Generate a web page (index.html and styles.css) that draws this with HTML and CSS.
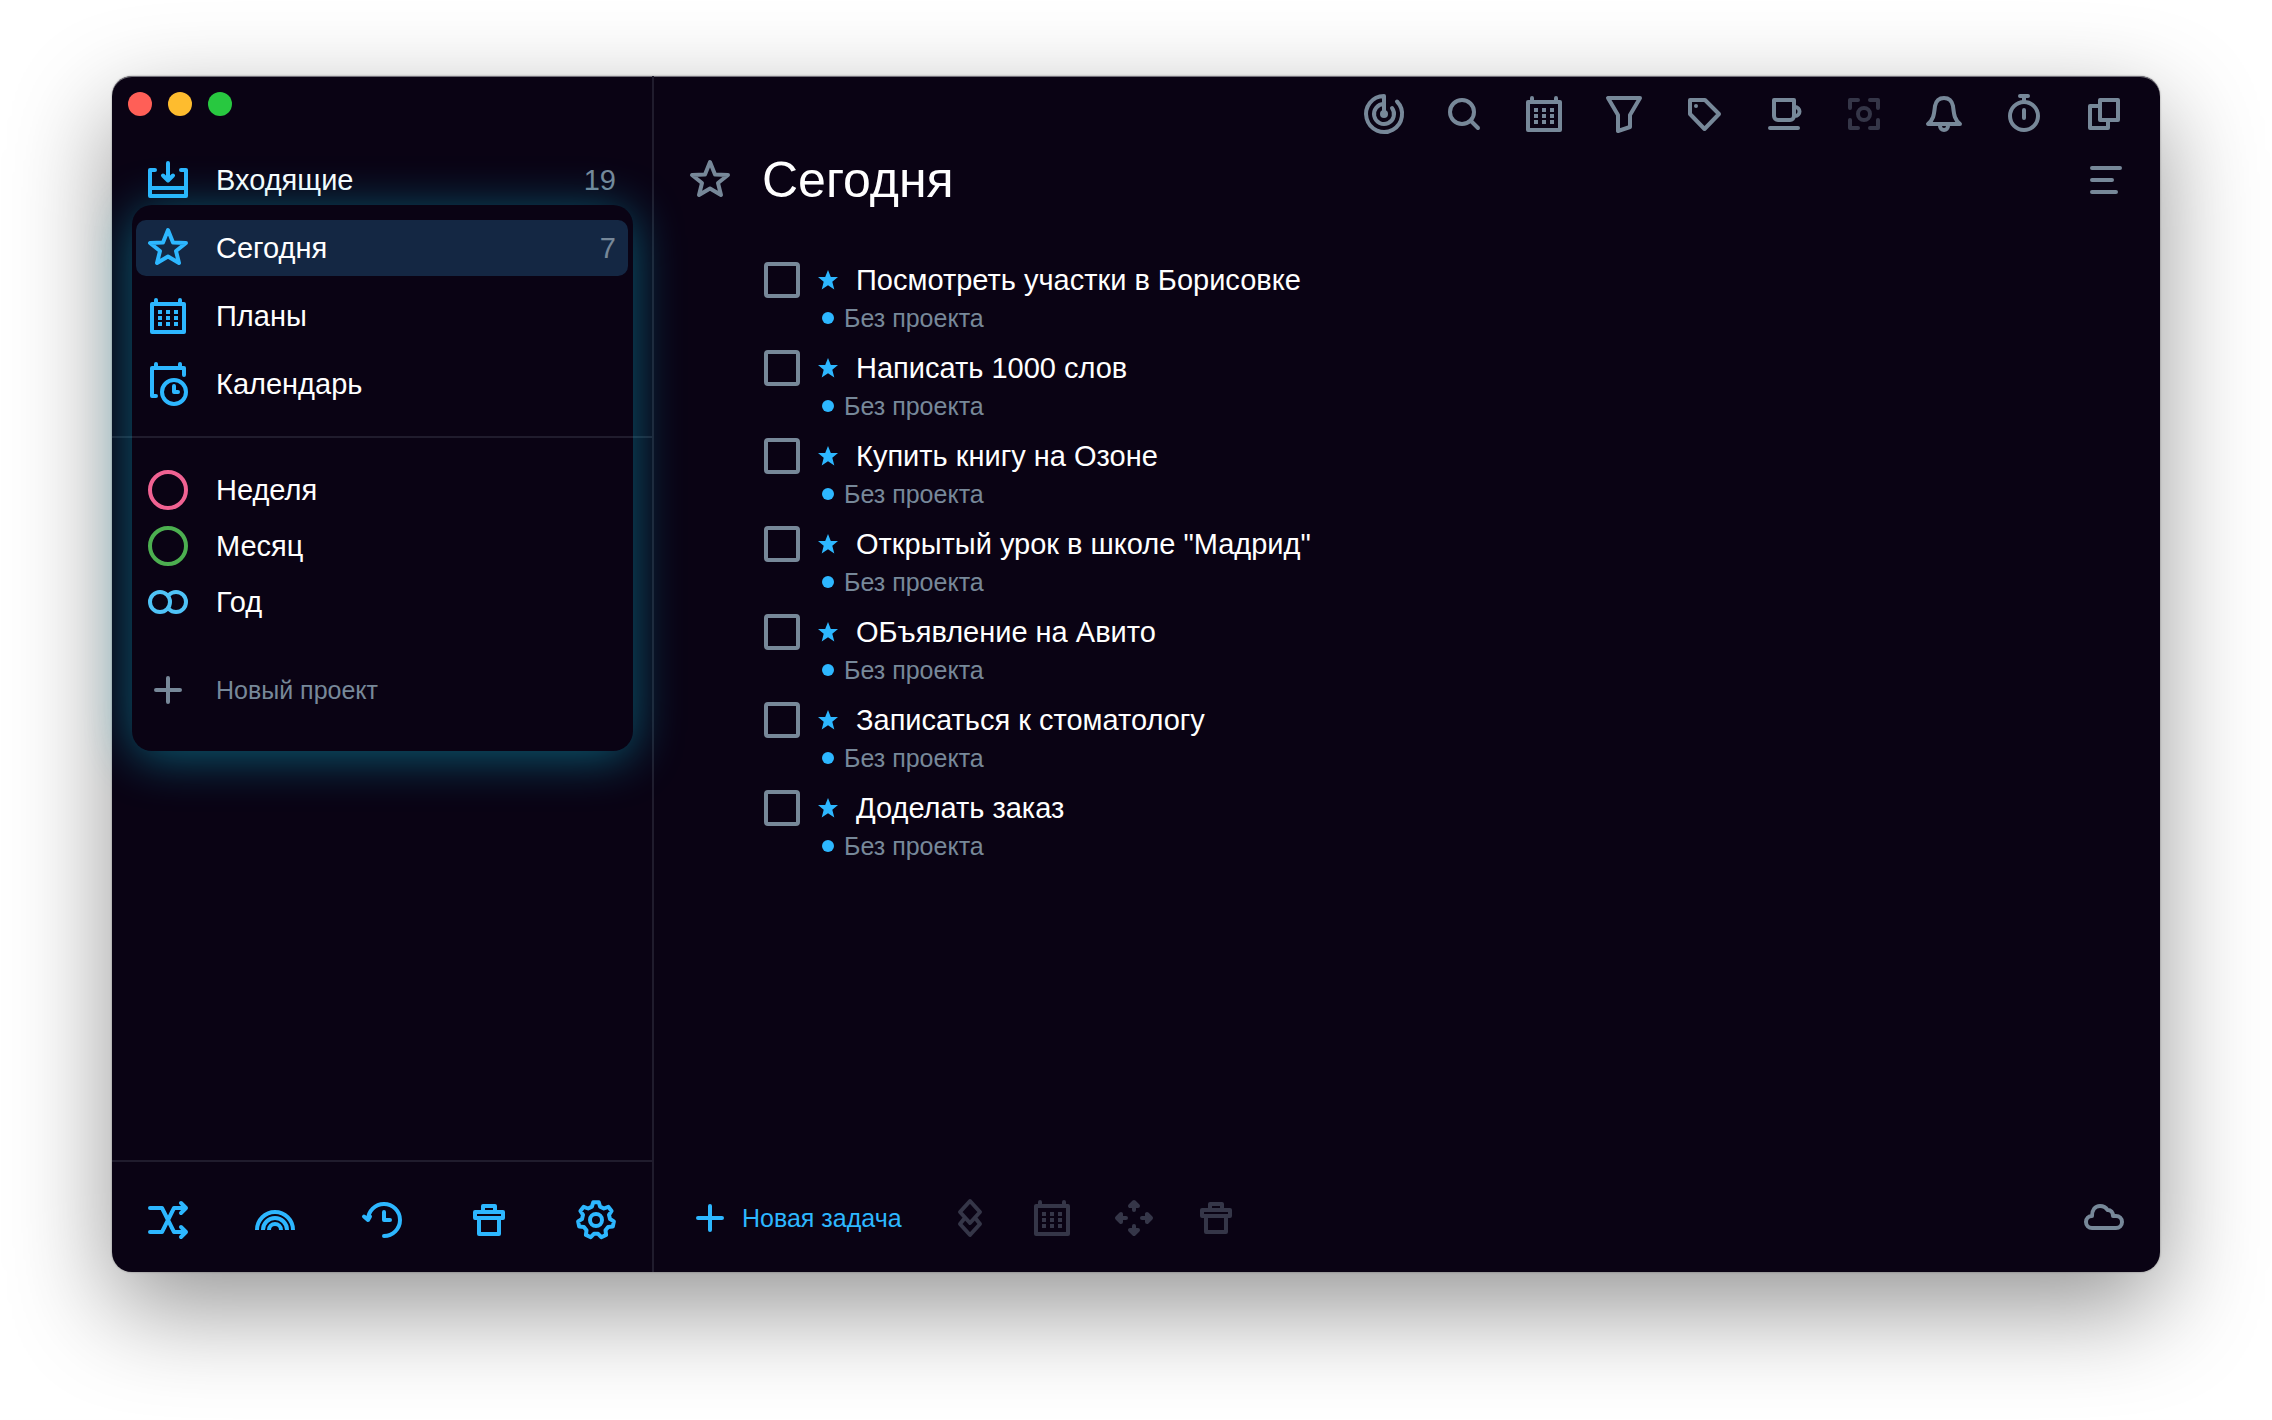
FILE: index.html
```html
<!DOCTYPE html>
<html lang="ru">
<head>
<meta charset="utf-8">
<meta name="viewport" content="width=device-width, initial-scale=1">
<title>Сегодня</title>
<link rel="stylesheet" href="styles.css">
</head>
<body>
<svg class="sprite" aria-hidden="true">
  <defs>
    <symbol id="inbox" viewBox="0 0 40 40"><path d="M7 10H2V36H38V10H33M2 28H38M20 3V20M15 15.500l5 5 5-5"/></symbol>
    <symbol id="star" viewBox="0 0 40 40"><path d="M20 2L25 14.500L38 15L28 23L31 35L20 28.500L9 35L12 23L2 15L15 14.500Z"/></symbol>
    <symbol id="star-solid" viewBox="0 0 20 20"><path class="solid" d="M10 0L12.800 7H20L14.300 11.700L16.300 19.500L10 15.200L3.700 19.500L5.700 11.700L0 7H7.200Z"/></symbol>
    <symbol id="calendar" viewBox="0 0 40 40"><path d="M4 8H36V36H4ZM8 8V4M32 8V4"/><path class="solid" d="M10 14h4v4h-4zM18 14h4v4h-4zM26 14h4v4h-4zM10 20h4v4h-4zM18 20h4v4h-4zM26 20h4v4h-4zM10 26h4v4h-4zM18 26h4v4h-4zM26 26h4v4h-4z"/></symbol>
    <symbol id="calendar-clock" viewBox="0 0 40 40"><path d="M8 32H4V4H36V11M8 4V0M32 4V0M26 22V28H30"/><circle cx="26" cy="28" r="12"/></symbol>
    <symbol id="ring" viewBox="0 0 40 40"><circle cx="20" cy="20" r="18"/></symbol>
    <symbol id="rings" viewBox="0 0 40 40"><circle cx="28" cy="20" r="10"/><circle class="mask" cx="12" cy="20" r="10"/></symbol>
    <symbol id="plus" viewBox="0 0 40 40"><path d="M8 20H32M20 8V32"/></symbol>
    <symbol id="shuffle" viewBox="0 0 40 40"><path d="M2 8H14L26 32H38M2 32H14L26 8H38M33 3l5 5-5 5M33 27l5 5-5 5"/></symbol>
    <symbol id="rainbow" viewBox="0 0 40 40"><path class="flat" d="M2 30a18 18 0 0 1 36 0M8 30a12 12 0 0 1 24 0M14 30a6 6 0 0 1 12 0"/></symbol>
    <symbol id="history" viewBox="0 0 40 40"><path d="M6 20A16 16 0 1 1 22 36M2 16.500L6 20L8 16.500M22 12V20H28"/></symbol>
    <symbol id="trash" viewBox="0 0 40 40"><path d="M6 12H34V18H6ZM14 12V6H26V12M10 18V34H30V18"/></symbol>
    <symbol id="gear" viewBox="0 0 40 40"><path d="M15.900 6.600L17.300 2.200H22.700L24.100 6.600L27.900 8.500L32.300 6.800L35.600 11L33 14.900L34 19L37.900 21.400L36.800 26.600L32.100 27L29.500 30.300L30.100 34.900L25.300 37.200L22.100 33.800H17.900L14.700 37.200L9.900 34.900L10.500 30.300L7.900 27L3.200 26.600L2.100 21.400L6 19L7 14.900L4.400 11L7.700 6.800L12.100 8.500Z"/><circle cx="20" cy="20" r="6"/></symbol>
    <symbol id="radar" viewBox="0 0 40 40"><path d="M20 20V2A18 18 0 1 0 33 7.500M20 10A10 10 0 1 0 28 14"/><circle class="solid" cx="20" cy="20" r="4"/></symbol>
    <symbol id="search" viewBox="0 0 40 40"><circle cx="18" cy="18" r="12"/><path d="M27 27L34 34"/></symbol>
    <symbol id="filter" viewBox="0 0 40 40"><path d="M4 4H36L26 21V33L14 37V21Z"/></symbol>
    <symbol id="tag" viewBox="0 0 40 40"><path d="M6 6H21L35 20L20.500 35L6 20Z"/><circle class="solid" cx="12" cy="12" r="2"/></symbol>
    <symbol id="cup" viewBox="0 0 40 40"><path d="M10 6H30V22A4 4 0 0 1 26 26H14A4 4 0 0 1 10 22ZM30 13h1a4 4 0 0 1 0 9h-1M6 34H34"/></symbol>
    <symbol id="focus" viewBox="0 0 40 40"><path d="M6 14V6H14M26 6H34V14M34 26V34H26M14 34H6V26"/><circle cx="20" cy="20" r="6"/></symbol>
    <symbol id="bell" viewBox="0 0 40 40"><path d="M4 30H36C30 25 30 20 29 12C28 7 25 4 20 4C15 4 12 7 11 12C10 20 10 25 4 30ZM16 32a4 4 0 0 0 8 0"/></symbol>
    <symbol id="timer" viewBox="0 0 40 40"><circle cx="20" cy="22" r="14"/><path d="M16 2H24M20 2V8M20 16V24"/></symbol>
    <symbol id="windows" viewBox="0 0 40 40"><path d="M16 6H34V26H16ZM16 12H6V34H24V26"/></symbol>
    <symbol id="lines" viewBox="0 0 40 40"><path d="M8 8H36M8 20H28M8 32H32"/></symbol>
    <symbol id="priority" viewBox="0 0 40 40"><path d="M20 3L30 14L20 25L10 14ZM14 21L10 26L20 37L30 26L26 21"/></symbol>
    <symbol id="move" viewBox="0 0 40 40"><path class="both" d="M20 4l-4 4h8zM20 8V12M20 36l-4-4h8zM20 32V28M3 20l4-4v8zM7 20H12M37 20l-4-4v8zM33 20H28"/></symbol>
    <symbol id="cloud" viewBox="0 0 40 40"><path d="M8 30A6 6 0 0 1 8 18C8 12 11 8 16 8C19.500 8 22 9.500 23.500 12C27 12 29 14.500 29 18H32A6 6 0 0 1 32 30Z"/></symbol>
  </defs>
</svg>

<div class="window">
  <aside class="sidebar">
    <div class="lights">
      <button class="light light-close" aria-label="Закрыть"></button>
      <button class="light light-min" aria-label="Свернуть"></button>
      <button class="light light-max" aria-label="Развернуть"></button>
    </div>
    <nav class="views">
      <a class="row" href="#inbox"><svg class="icon"><use href="#inbox"/></svg><span class="name">Входящие</span><span class="count">19</span></a>
      <a class="row current" href="#today" aria-current="page"><svg class="icon"><use href="#star"/></svg><span class="name">Сегодня</span><span class="count">7</span></a>
      <a class="row" href="#plans"><svg class="icon"><use href="#calendar"/></svg><span class="name">Планы</span></a>
      <a class="row" href="#schedule"><svg class="icon"><use href="#calendar-clock"/></svg><span class="name">Календарь</span></a>
    </nav>
    <nav class="projects">
      <a class="row" href="#week"><svg class="icon pink"><use href="#ring"/></svg><span class="name">Неделя</span></a>
      <a class="row" href="#month"><svg class="icon green"><use href="#ring"/></svg><span class="name">Месяц</span></a>
      <a class="row" href="#year"><svg class="icon sky"><use href="#rings"/></svg><span class="name">Год</span></a>
      <button class="row new-project"><svg class="icon muted"><use href="#plus"/></svg><span class="name">Новый проект</span></button>
    </nav>
    <div class="tools">
      <button class="tool" aria-label="Перемешать"><svg class="icon"><use href="#shuffle"/></svg></button>
      <button class="tool" aria-label="Темы"><svg class="icon"><use href="#rainbow"/></svg></button>
      <button class="tool" aria-label="История"><svg class="icon"><use href="#history"/></svg></button>
      <button class="tool" aria-label="Корзина"><svg class="icon"><use href="#trash"/></svg></button>
      <button class="tool" aria-label="Настройки"><svg class="icon"><use href="#gear"/></svg></button>
    </div>
    <div class="spotlight"></div>
  </aside>

  <main class="main">
    <div class="toolbar">
      <button class="tool" aria-label="Обзор"><svg class="icon muted"><use href="#radar"/></svg></button>
      <button class="tool" aria-label="Поиск"><svg class="icon muted"><use href="#search"/></svg></button>
      <button class="tool" aria-label="Дата"><svg class="icon muted"><use href="#calendar"/></svg></button>
      <button class="tool" aria-label="Фильтр"><svg class="icon muted"><use href="#filter"/></svg></button>
      <button class="tool" aria-label="Метки"><svg class="icon muted"><use href="#tag"/></svg></button>
      <button class="tool" aria-label="Перерыв"><svg class="icon muted"><use href="#cup"/></svg></button>
      <button class="tool" aria-label="Фокус" disabled><svg class="icon dim"><use href="#focus"/></svg></button>
      <button class="tool" aria-label="Напоминания"><svg class="icon muted"><use href="#bell"/></svg></button>
      <button class="tool" aria-label="Таймер"><svg class="icon muted"><use href="#timer"/></svg></button>
      <button class="tool" aria-label="Новое окно"><svg class="icon muted"><use href="#windows"/></svg></button>
    </div>
    <header class="heading">
      <svg class="icon muted"><use href="#star"/></svg>
      <h1 class="title">Сегодня</h1>
      <button class="tool push" aria-label="Вид списка"><svg class="icon muted"><use href="#lines"/></svg></button>
    </header>
    <ul class="tasks">
      <li class="task">
        <div class="task-line"><input class="check" type="checkbox" id="t1"><svg class="task-star"><use href="#star-solid"/></svg><label for="t1">Посмотреть участки в Борисовке</label></div>
        <div class="task-project">Без проекта</div>
      </li>
      <li class="task">
        <div class="task-line"><input class="check" type="checkbox" id="t2"><svg class="task-star"><use href="#star-solid"/></svg><label for="t2">Написать 1000 слов</label></div>
        <div class="task-project">Без проекта</div>
      </li>
      <li class="task">
        <div class="task-line"><input class="check" type="checkbox" id="t3"><svg class="task-star"><use href="#star-solid"/></svg><label for="t3">Купить книгу на Озоне</label></div>
        <div class="task-project">Без проекта</div>
      </li>
      <li class="task">
        <div class="task-line"><input class="check" type="checkbox" id="t4"><svg class="task-star"><use href="#star-solid"/></svg><label for="t4">Открытый урок в школе "Мадрид"</label></div>
        <div class="task-project">Без проекта</div>
      </li>
      <li class="task">
        <div class="task-line"><input class="check" type="checkbox" id="t5"><svg class="task-star"><use href="#star-solid"/></svg><label for="t5">ОБъявление на Авито</label></div>
        <div class="task-project">Без проекта</div>
      </li>
      <li class="task">
        <div class="task-line"><input class="check" type="checkbox" id="t6"><svg class="task-star"><use href="#star-solid"/></svg><label for="t6">Записаться к стоматологу</label></div>
        <div class="task-project">Без проекта</div>
      </li>
      <li class="task">
        <div class="task-line"><input class="check" type="checkbox" id="t7"><svg class="task-star"><use href="#star-solid"/></svg><label for="t7">Доделать заказ</label></div>
        <div class="task-project">Без проекта</div>
      </li>
    </ul>
    <footer class="actions">
      <button class="new-task"><svg class="icon"><use href="#plus"/></svg>Новая задача</button>
      <button class="tool" aria-label="Приоритет" disabled><svg class="icon dim"><use href="#priority"/></svg></button>
      <button class="tool" aria-label="Назначить дату" disabled><svg class="icon dim"><use href="#calendar"/></svg></button>
      <button class="tool" aria-label="Переместить" disabled><svg class="icon dim"><use href="#move"/></svg></button>
      <button class="tool" aria-label="Удалить" disabled><svg class="icon dim"><use href="#trash"/></svg></button>
      <button class="tool push" aria-label="Синхронизация"><svg class="icon muted"><use href="#cloud"/></svg></button>
    </footer>
  </main>
</div>
</body>
</html>
```
FILE: styles.css
```css
:root {
  --bg: #0a0314;
  --line: #201c2d;
  --accent: #2db7ff;
  --muted: #778899;
  --dim: #353648;
  --selected: #142743;
}

* {
  box-sizing: border-box;
}

body {
  margin: 0;
  min-height: 100vh;
  padding: 76px 112px 148px;
  display: flex;
  background: #fff;
  color: #fff;
  font: 29px/36px "Liberation Sans", Arial, sans-serif;
}

button {
  border: 0;
  margin: 0;
  padding: 0;
  background: none;
  color: inherit;
  font: inherit;
}

.sprite {
  position: absolute;
  width: 0;
  height: 0;
}

.icon {
  display: block;
  flex: none;
  width: 40px;
  height: 40px;
  overflow: visible;
  color: var(--accent);
  fill: none;
  stroke: currentColor;
  stroke-width: 4px;
  stroke-linecap: round;
  stroke-linejoin: round;
}

symbol {
  overflow: visible;
}

.solid {
  fill: currentColor;
  stroke: none;
}

.both {
  fill: currentColor;
}

.flat {
  stroke-linecap: butt;
}

.mask {
  fill: var(--bg);
}

.muted { color: var(--muted); }
.dim { color: var(--dim); }
.pink { color: #f06292; }
.green { color: #4caf50; }
.sky { color: #4fc3f7; }

.window {
  flex: 1;
  display: flex;
  border-radius: 20px;
  background: var(--bg);
  box-shadow: inset 0 1px 0 rgba(160, 160, 165, 0.7), 0 0 2px rgba(0, 0, 0, 0.4), 0 36px 100px rgba(0, 0, 0, 0.42);
}

/* Sidebar */

.sidebar {
  position: relative;
  flex: none;
  width: 542px;
  display: flex;
  flex-direction: column;
  border-right: 2px solid var(--line);
}

.lights {
  display: flex;
  gap: 16px;
  padding: 16px 16px 36px;
}

.light {
  width: 24px;
  height: 24px;
  border-radius: 50%;
}

.light-close { background: #ff5f57; }
.light-min { background: #febc2e; }
.light-max { background: #28c840; }

.views {
  display: flex;
  flex-direction: column;
  gap: 12px;
  padding: 0 24px 24px;
  border-bottom: 2px solid var(--line);
}

.projects {
  flex: 1;
  padding: 24px 24px 32px;
}

.row {
  display: flex;
  align-items: center;
  gap: 28px;
  width: 100%;
  height: 56px;
  padding: 0 12px;
  border-radius: 10px;
  color: inherit;
  text-align: left;
  text-decoration: none;
}

.current {
  background: var(--selected);
}

.name {
  flex: 1;
}

.count {
  color: var(--muted);
}

.new-project {
  margin-top: 32px;
  color: var(--muted);
  font-size: 25px;
}

.tools {
  display: flex;
  justify-content: space-between;
  padding: 38px 36px 32px;
  border-top: 2px solid var(--line);
}

/* Glow that highlights part of the sidebar */
.spotlight {
  position: absolute;
  inset: 129px 19px auto 20px;
  height: 546px;
  border-radius: 20px;
  box-shadow: 0 6px 50px rgba(10, 195, 225, 0.48);
  pointer-events: none;
}

/* Main pane */

.main {
  flex: 1;
  min-width: 0;
  display: flex;
  flex-direction: column;
}

.toolbar {
  display: flex;
  flex-wrap: wrap;
  justify-content: flex-end;
  gap: 40px;
  padding: 18px 36px;
}

.heading {
  display: flex;
  align-items: center;
  gap: 32px;
  height: 56px;
  padding: 0 36px;
}

.title {
  margin: 0;
  font-size: 50px;
  line-height: 56px;
  font-weight: 400;
}

.push {
  margin-left: auto;
}

.tasks {
  flex: 1;
  margin: 0;
  padding: 54px 36px 0 110px;
  list-style: none;
}

.task {
  height: 88px;
}

.task-line {
  display: flex;
  align-items: center;
  gap: 18px;
}

.check {
  appearance: none;
  flex: none;
  width: 36px;
  height: 36px;
  margin: 0;
  border: 4px solid var(--muted);
  border-radius: 4px;
}

.task-star {
  flex: none;
  width: 20px;
  height: 20px;
  color: var(--accent);
}

.task-project {
  display: flex;
  align-items: center;
  gap: 10px;
  padding-left: 58px;
  color: var(--muted);
  font-size: 25px;
  line-height: 40px;
}

.task-project::before {
  content: "";
  width: 12px;
  height: 12px;
  border-radius: 50%;
  background: var(--accent);
}

.actions {
  display: flex;
  align-items: center;
  gap: 42px;
  height: 108px;
  padding: 0 36px;
}

.new-task {
  display: flex;
  align-items: center;
  gap: 12px;
  margin-right: 6px;
  color: var(--accent);
  font-size: 25px;
}
```
